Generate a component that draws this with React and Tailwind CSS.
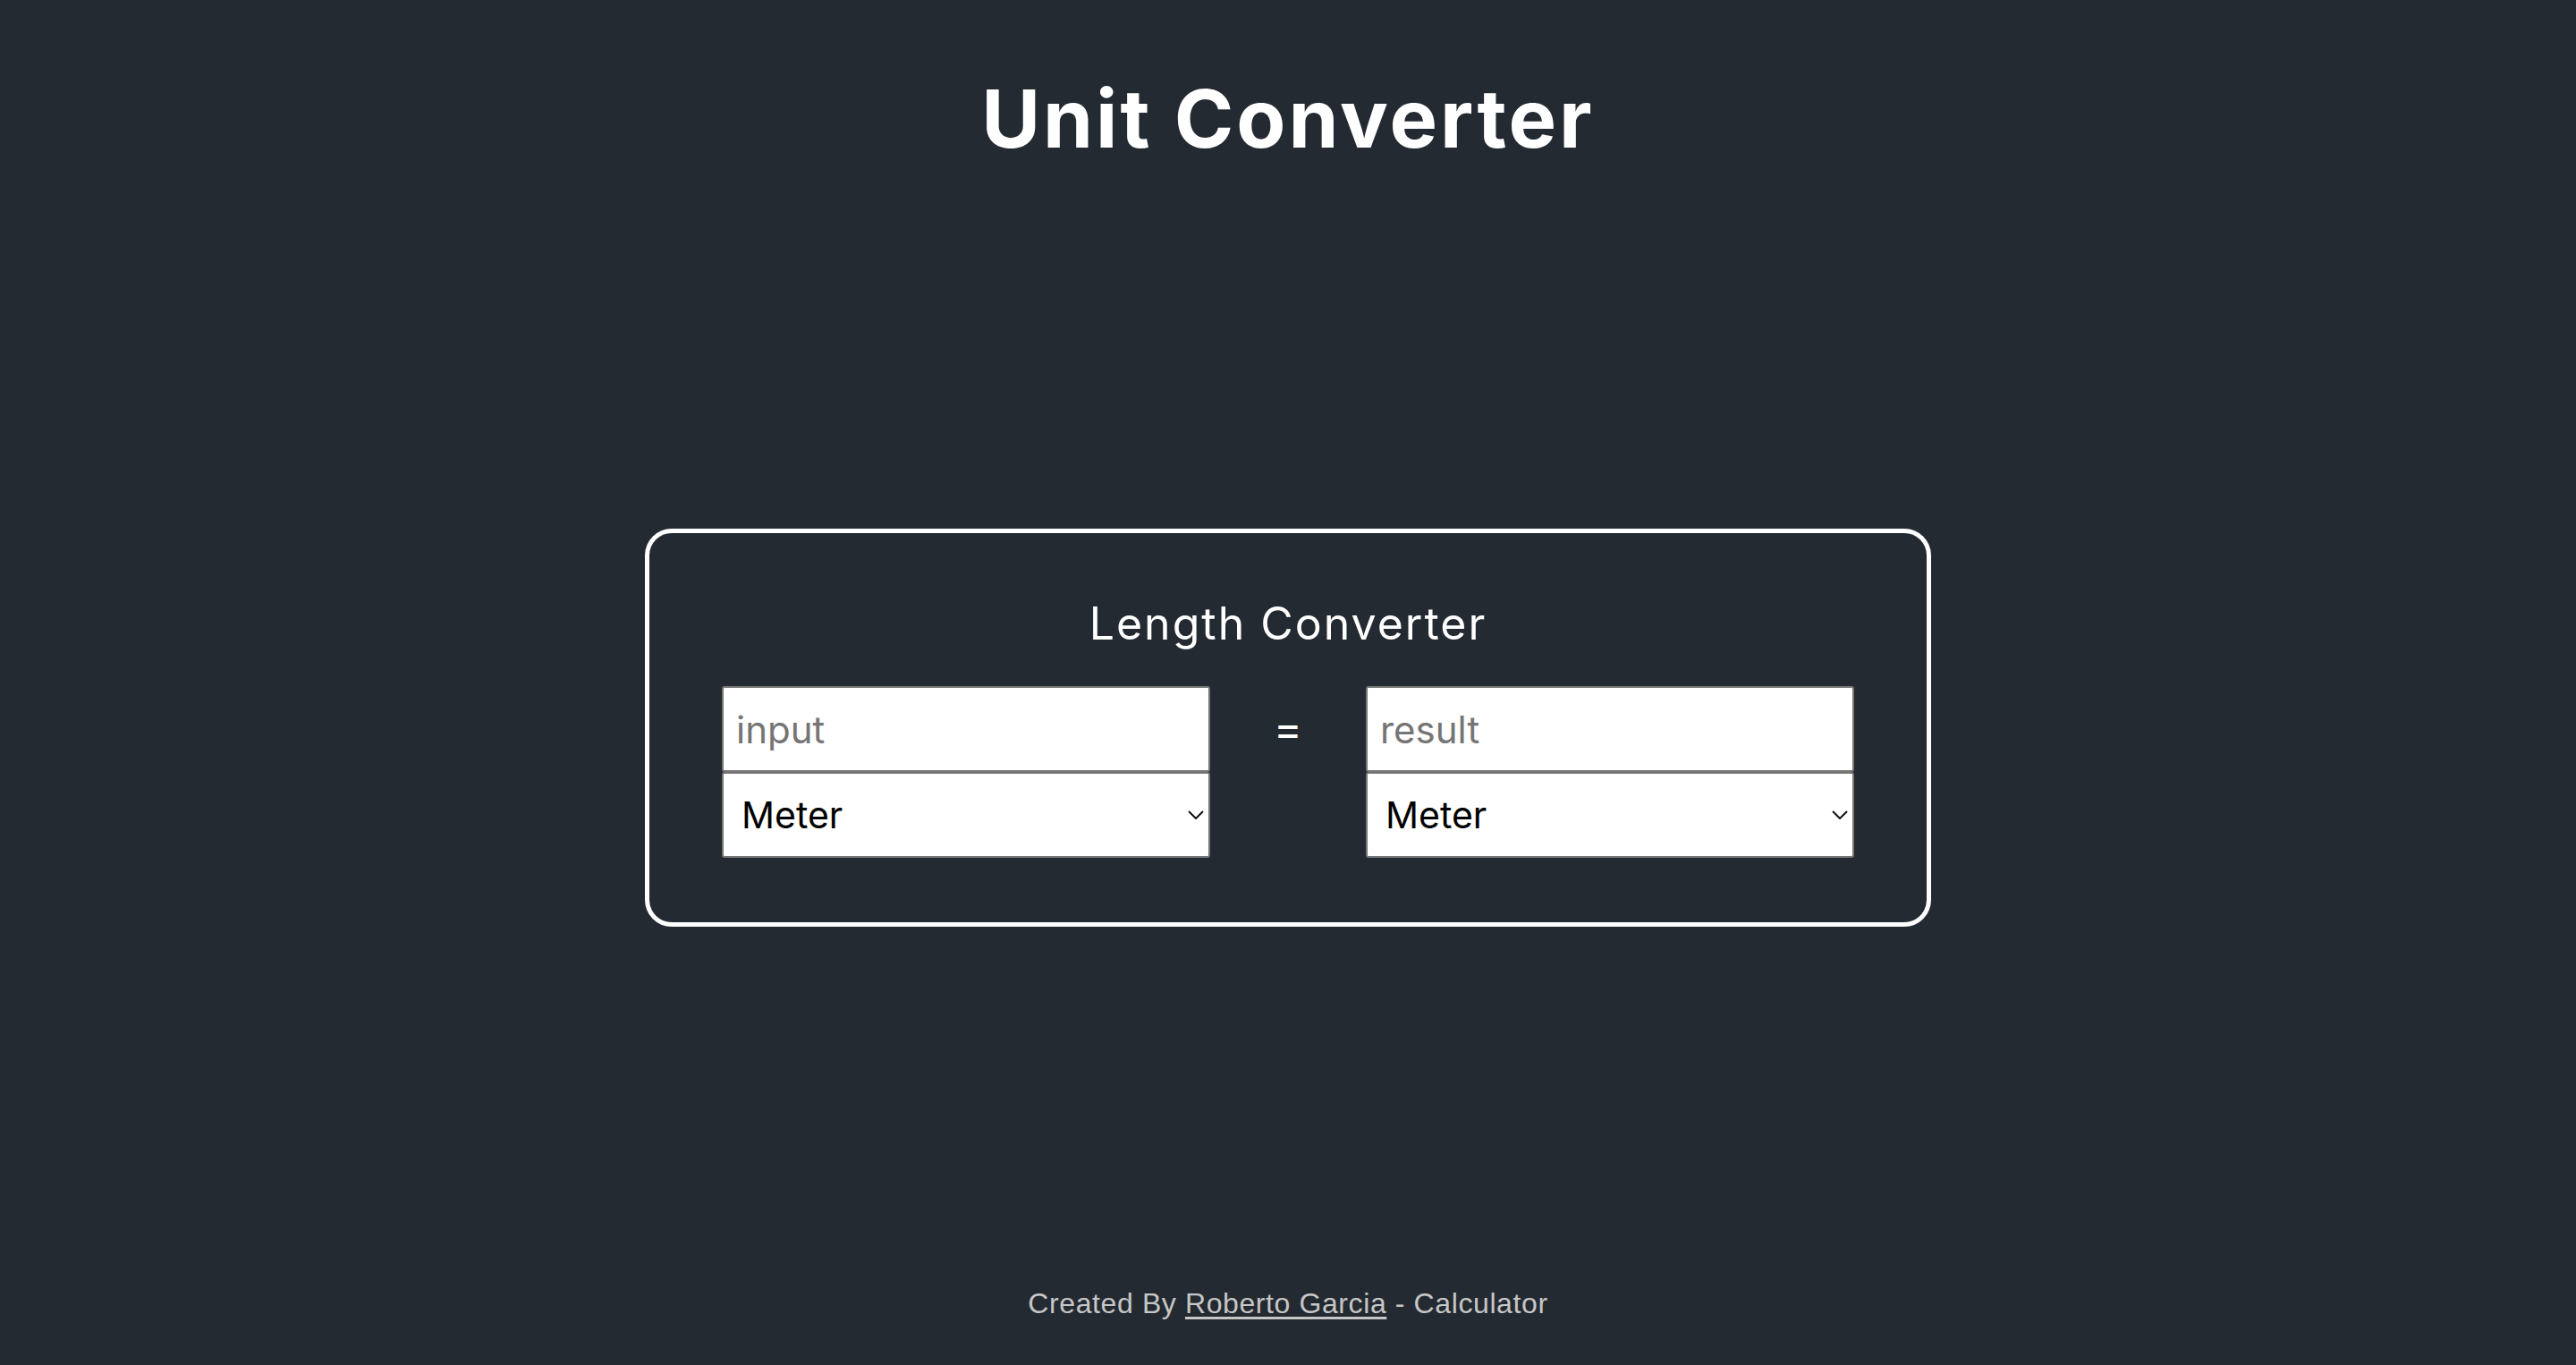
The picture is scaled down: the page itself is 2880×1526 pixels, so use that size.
import React, { useState } from "react";

const units = ["Meter", "Kilometer", "Centimeter", "Millimeter", "Mile", "Yard", "Foot", "Inch"];

function UnitSelect({ value, onChange }) {
  return (
    <div className="relative h-[96px] w-full">
      <select
        value={value}
        onChange={(e) => onChange(e.target.value)}
        className="h-full w-full appearance-none rounded-[3px] border-2 border-[#767676] bg-white pl-[20px] pr-[40px] text-[41px] leading-none text-black outline-none"
      >
        {units.map((u) => (
          <option key={u} value={u}>
            {u}
          </option>
        ))}
      </select>
      <svg
        className="pointer-events-none absolute right-[7px] top-1/2 -translate-y-1/2"
        width="18"
        height="10"
        viewBox="0 0 18 10"
        fill="none"
      >
        <path d="M1 1l8 8 8-8" stroke="#111" strokeWidth="2" />
      </svg>
    </div>
  );
}

export default function App() {
  const [value, setValue] = useState("");
  const [from, setFrom] = useState("Meter");
  const [to, setTo] = useState("Meter");

  return (
    <div
      className="min-h-screen bg-[#242a31] flex flex-col items-center pt-[88px]"
      style={{ fontFamily: "Inter, 'Noto Sans', sans-serif" }}
    >
      <h1 className="text-[90px] font-bold leading-none tracking-[3px] text-white">Unit Converter</h1>

      <div className="mt-[413px] w-[1438px] rounded-[30px] border-[5px] border-white px-[81px] pt-[76px] pb-[72px] flex flex-col items-center">
        <h2 className="text-[50px] font-normal leading-none tracking-[2px] text-white">Length Converter</h2>

        <div className="mt-[45px] grid grid-cols-[546px_174px_546px]">
          <div className="flex flex-col">
            <input
              type="number"
              placeholder="input"
              value={value}
              onChange={(e) => setValue(e.target.value)}
              className="h-[96px] w-full rounded-[3px] border-2 border-[#767676] bg-white pl-[14px] text-[42px] text-black outline-none placeholder:text-[#757575]"
            />
            <UnitSelect value={from} onChange={setFrom} />
          </div>

          <div className="flex h-[96px] items-center justify-center text-[48px] leading-none text-white">=</div>

          <div className="flex flex-col">
            <input
              type="text"
              readOnly
              placeholder="result"
              value=""
              className="h-[96px] w-full rounded-[3px] border-2 border-[#767676] bg-white pl-[14px] text-[42px] text-black outline-none placeholder:text-[#757575]"
            />
            <UnitSelect value={to} onChange={setTo} />
          </div>
        </div>
      </div>

      <footer
        className="mt-[405px] text-[32px] leading-none tracking-[0.6px] text-[#c6c6c6]"
        style={{ fontFamily: "'Liberation Sans', Arial, sans-serif" }}
      >
        Created By{" "}
        <a href="#" className="underline underline-offset-4">
          Roberto Garcia
        </a>{" "}
        - Calculator
      </footer>
    </div>
  );
}
